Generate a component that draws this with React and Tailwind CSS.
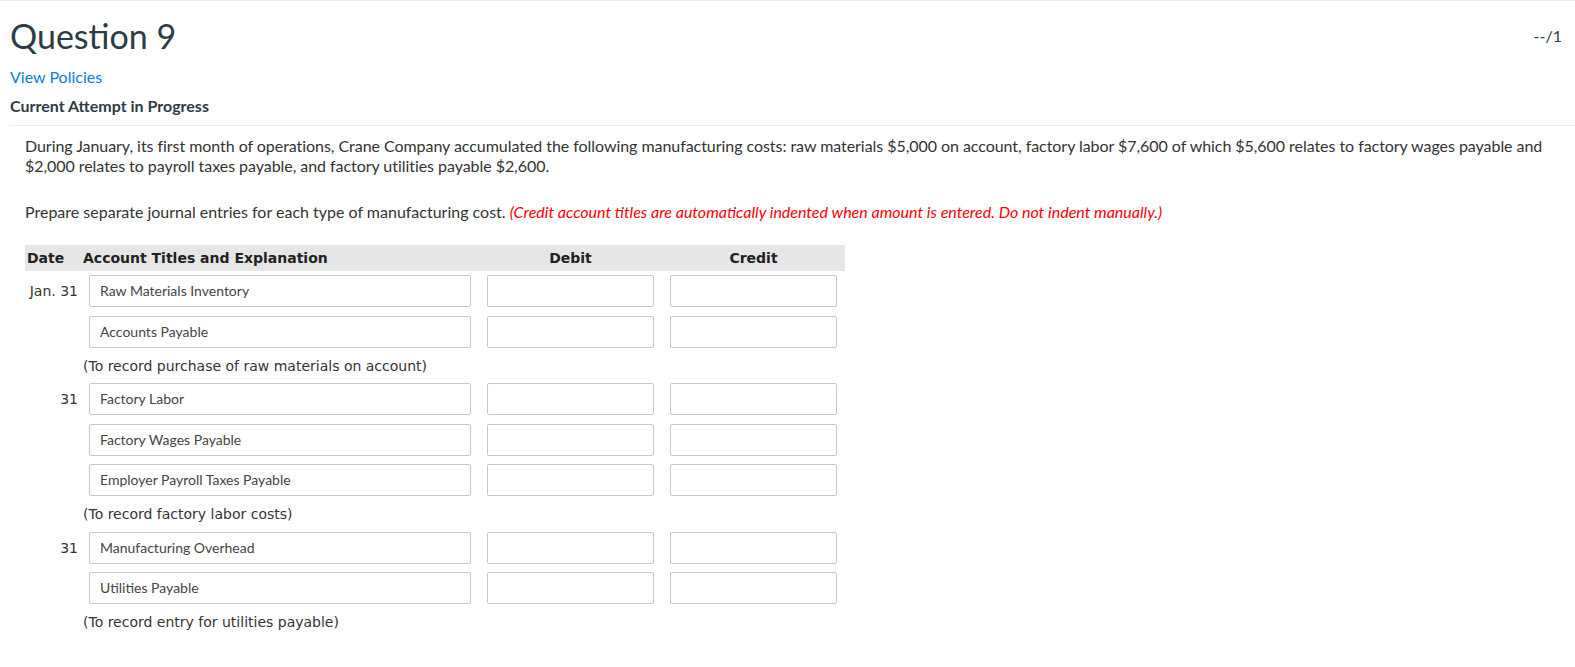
import React from 'react';

const entries = [
  {
    date: 'Jan. 31',
    rows: ['Raw Materials Inventory', 'Accounts Payable'],
    note: '(To record purchase of raw materials on account)',
  },
  {
    date: '31',
    rows: ['Factory Labor', 'Factory Wages Payable', 'Employer Payroll Taxes Payable'],
    note: '(To record factory labor costs)',
  },
  {
    date: '31',
    rows: ['Manufacturing Overhead', 'Utilities Payable'],
    note: '(To record entry for utilities payable)',
  },
];

const Box = ({ value }) => (
  <div className="h-[32px] border border-[#c7c7c7] rounded-[2px] bg-white flex items-center pl-[10px] text-[14px] text-[#444] font-['Lato',sans-serif]">
    {value}
  </div>
);

const App = () => {
  return (
    <div className="w-[1575px] h-[667px] bg-white border-t border-[#ebebeb] text-[#2d3b45] font-['Lato',sans-serif] overflow-hidden">
      {/* Header */}
      <div className="flex justify-between pl-[10px] pr-[13px] pt-[13px]">
        <h1 className="text-[34px] leading-[44px] text-[#2d3b45]">Question 9</h1>
        <div className="text-[16px] pt-[10px] text-[#2d3b45]">--/1</div>
      </div>
      <div className="pl-[10px] pt-[9px] text-[16px] leading-[20px] text-[#0a7fd8]">View Policies</div>
      <div className="pl-[10px] pt-[9px] pb-[9px] text-[16px] leading-[20px] font-bold text-[#2d3b45]">
        Current Attempt in Progress
      </div>
      <div className="ml-[10px] border-t border-[#ebebeb]"></div>

      {/* Question body */}
      <div className="pl-[25px] pr-[20px] pt-[10px] text-[16px] leading-[20px] text-[#333]">
        <p className="tracking-[-0.05px]">
          During January, its first month of operations, Crane Company accumulated the following manufacturing costs: raw materials $5,000 on account, factory labor $7,600 of which $5,600 relates to factory wages payable and $2,000 relates to payroll taxes payable, and factory utilities payable $2,600.
        </p>
        <p className="mt-[26px]">
          Prepare separate journal entries for each type of manufacturing cost.{' '}
          <span className="italic text-[#ff0000]">
            (Credit account titles are automatically indented when amount is entered. Do not indent manually.)
          </span>
        </p>

        {/* Journal table */}
        <div className="mt-[23px] w-[820px] font-['DejaVu_Sans',sans-serif] text-[#333]">
          <div className="h-[26px] bg-[#e6e6e6] flex items-center text-[14px] font-bold text-[#222]">
            <div className="w-[58px] pl-[2px]">Date</div>
            <div className="w-[396px]">Account Titles and Explanation</div>
            <div className="w-[183px] text-center">Debit</div>
            <div className="w-[183px] text-center">Credit</div>
          </div>
          {entries.map((entry, i) => (
            <div key={i}>
              {entry.rows.map((row, j) => (
                <div key={j} className="h-[40.5px] flex pt-[4px]">
                  <div className="w-[58px] pr-[5px] h-[32px] flex items-center justify-end text-[14px]">
                    {j === 0 ? entry.date : ''}
                  </div>
                  <div className="w-[396px] pl-[6px] pr-[8px]">
                    <Box value={row} />
                  </div>
                  <div className="w-[183px] px-[8px]">
                    <Box value="" />
                  </div>
                  <div className="w-[183px] px-[8px]">
                    <Box value="" />
                  </div>
                </div>
              ))}
              <div className="h-[27px] pl-[58px] flex items-center text-[14px]">{entry.note}</div>
            </div>
          ))}
        </div>
      </div>
    </div>
  );
};

export default App;
